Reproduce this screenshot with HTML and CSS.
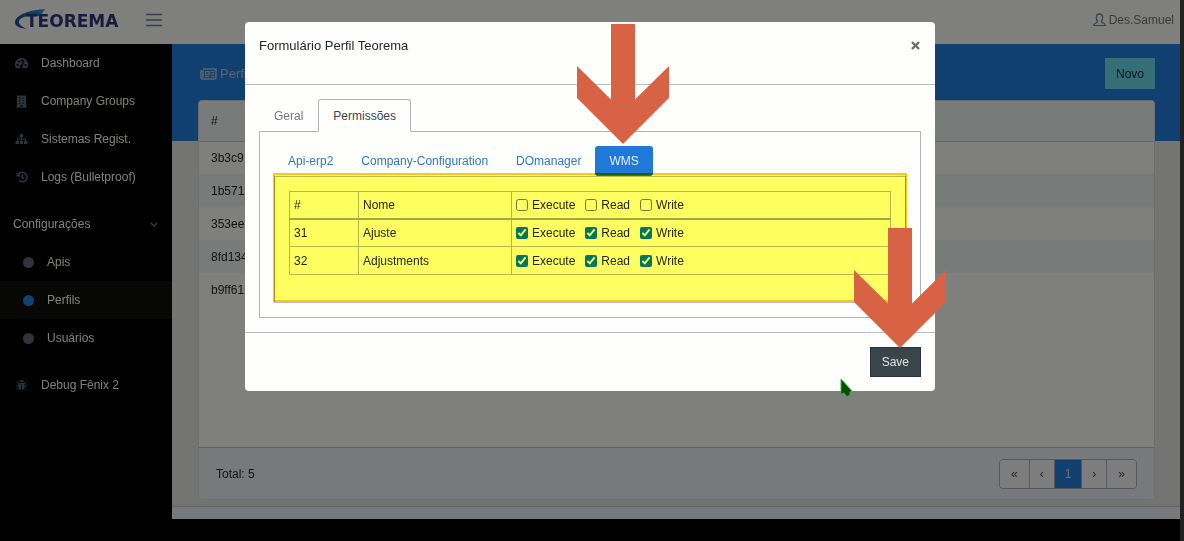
FILE: index.html
```html
<!DOCTYPE html>
<html lang="pt-BR">
<head>
<meta charset="utf-8">
<meta name="viewport" content="width=device-width, initial-scale=1">
<title>Teorema - Perfils</title>
<link rel="stylesheet" href="styles.css">
</head>
<body>
<div class="screen">
  <div class="app">
    <header class="topbar">
      <a class="brand" href="#" aria-label="Teorema">
        <svg width="106" height="24" viewBox="0 0 106 24">
          <defs>
            <linearGradient id="swoosh" x1="0" y1="1" x2="1" y2="0">
              <stop offset="0" stop-color="#24408c"/>
              <stop offset="0.5" stop-color="#1c63a8"/>
              <stop offset="1" stop-color="#28a0e0"/>
            </linearGradient>
          </defs>
          <path d="M31 1C17 2 2 6 1 14c0 4 4 6 12 7C7 18 4 16 5 13c1-3 6-5 12-5l8 0c2-1 4-4 6-7z" fill="url(#swoosh)"/>
          <text class="brand-text" x="12" y="19">TEOREMA</text>
        </svg>
      </a>
      <button class="menu-toggle" type="button" aria-label="Menu">
        <svg width="16" height="14" viewBox="0 0 16 14"><path d="M0 1.500h16M0 7h16M0 12.500h16" stroke="#73818f" stroke-width="1.600"/></svg>
      </button>
      <a class="user" href="#">
        <svg width="13" height="14" viewBox="0 0 13 14"><path d="M4.600 8.600C3.400 7 3.200 5.500 3.300 4 3.500 2 4.700.8 6.500.8S9.500 2 9.700 4c.1 1.500-.1 3-1.300 4.600.2.900 1 1.200 2.200 1.600 1.200.4 1.600 1 1.700 2.300H.7C.8 11.200 1.200 10.600 2.400 10.200 3.600 9.800 4.400 9.500 4.600 8.600z" fill="none" stroke="#73818f" stroke-width="1.200"/></svg>
        Des.Samuel
      </a>
    </header>
    <div class="workspace">
      <nav class="sidebar">
        <a class="nav-item" href="#"><span class="nav-icon"><svg width="13" height="12" viewBox="0 0 26 24"><path fill="#536c79" fill-rule="evenodd" d="M13 2A13 13 0 0 0 2 22h22A13 13 0 0 0 13 2zM5 14a2 2 0 1 0 .1 0zM8 7a2 2 0 1 0 .1 0zM14 5a2 2 0 1 0 .1 0zM21 14a2 2 0 1 0 .1 0zM17 7l2 1-4 9a3 3 0 1 1-3-1z"/></svg></span>Dashboard</a>
        <a class="nav-item" href="#"><span class="nav-icon"><svg width="11" height="13" viewBox="0 0 22 26"><path fill="#536c79" fill-rule="evenodd" d="M2 1h18v22h2v2H0v-2h2zM6 5v2h3V5zM13 5v2h3V5zM6 10v2h3v-2zM13 10v2h3v-2zM6 15v2h3v-2zM13 15v2h3v-2zM9 20v3h4v-3z"/></svg></span>Company Groups</a>
        <a class="nav-item" href="#"><span class="nav-icon"><svg width="13" height="12" viewBox="0 0 26 24"><path fill="#536c79" d="M10 2h6v6h-2v3h8v5h3v6h-7v-6h2v-3h-6v3h2v6h-6v-6h2v-3H6v3h2v6H1v-6h3v-5h8V8h-2z"/></svg></span>Sistemas Regist.</a>
        <a class="nav-item" href="#"><span class="nav-icon"><svg width="12" height="12" viewBox="0 0 24 24"><path d="M4 8a9.500 9.500 0 1 1 2 11M12.500 6v7l4 2" fill="none" stroke="#536c79" stroke-width="3"/><path d="M1 2v9h9z" fill="#536c79"/></svg></span>Logs (Bulletproof)</a>
        <button class="nav-group" type="button">Configurações
          <svg width="8" height="5" viewBox="0 0 8 5"><path d="M1 1l3 3 3-3" fill="none" stroke="#73818f" stroke-width="1.300"/></svg>
        </button>
        <a class="nav-item nav-sub" href="#"><span class="dot"></span>Apis</a>
        <a class="nav-item nav-sub active" href="#"><span class="dot"></span>Perfils</a>
        <a class="nav-item nav-sub" href="#"><span class="dot"></span>Usuários</a>
        <a class="nav-item nav-last" href="#"><span class="nav-icon"><svg width="11" height="12" viewBox="0 0 22 24"><path fill="#536c79" d="M7 6a4 4 0 0 1 8 0zM5 8h12v9a6 6 0 0 1-5 5V10h-2v12a6 6 0 0 1-5-5z"/><path d="M1 5l5 5M21 5l-5 5M0 14h22M1 22l5-5M21 22l-5-5" stroke="#536c79" stroke-width="2"/></svg></span>Debug Fênix 2</a>
      </nav>
      <main class="main">
        <div class="content">
          <div class="page-head">
            <h1 class="page-title">
              <svg width="17" height="12" viewBox="0 0 34 24"><path d="M6 2h26v17q0 3-3 3H5q-3 0-3-3V6h4v13" fill="none" stroke="#b4c8dc" stroke-width="3"/><path d="M11 7h7v6h-7zM21 7h8M21 12h8M10 17h8M21 17h8" fill="none" stroke="#b4c8dc" stroke-width="2.500"/></svg>
              Perfils
            </h1>
            <button class="btn-new" type="button">Novo</button>
          </div>
          <section class="card">
            <table class="list">
              <thead><tr><th>#</th></tr></thead>
              <tbody>
                <tr><td>3b3c9</td></tr>
                <tr><td>1b571</td></tr>
                <tr><td>353ee</td></tr>
                <tr><td>8fd134</td></tr>
                <tr><td>b9ff61</td></tr>
              </tbody>
            </table>
            <div class="card-foot">
              <span>Total: 5</span>
              <div class="pager">
                <button type="button">«</button>
                <button type="button">‹</button>
                <button type="button" class="current">1</button>
                <button type="button">›</button>
                <button type="button">»</button>
              </div>
            </div>
          </section>
        </div>
        <footer class="page-foot"></footer>
      </main>
    </div>
  </div>

  <div class="backdrop">
    <div class="modal" role="dialog" aria-labelledby="modal-title">
      <div class="modal-head">
        <h2 id="modal-title">Formulário Perfil Teorema</h2>
        <button class="close" type="button" aria-label="Fechar">
          <svg width="9" height="9" viewBox="0 0 9 9"><path d="M1 1l7 7M8 1l-7 7" stroke="#6e6e6e" stroke-width="2.400"/></svg>
        </button>
      </div>
      <div class="modal-body">
        <div class="tabs">
          <a class="tab" href="#">Geral</a>
          <a class="tab selected" href="#">Permissões</a>
        </div>
        <div class="tab-panel">
          <div class="pills">
            <a class="pill" href="#">Api-erp2</a>
            <a class="pill" href="#">Company-Configuration</a>
            <a class="pill" href="#">DOmanager</a>
            <a class="pill selected" href="#">WMS</a>
          </div>
          <div class="pill-panel">
            <table class="perms">
              <thead>
                <tr>
                  <th class="col-id">#</th>
                  <th class="col-name">Nome</th>
                  <th><div class="checks">
                    <label><input type="checkbox">Execute</label>
                    <label><input type="checkbox">Read</label>
                    <label><input type="checkbox">Write</label>
                  </div></th>
                </tr>
              </thead>
              <tbody>
                <tr>
                  <td>31</td>
                  <td>Ajuste</td>
                  <td><div class="checks">
                    <label><input type="checkbox" checked>Execute</label>
                    <label><input type="checkbox" checked>Read</label>
                    <label><input type="checkbox" checked>Write</label>
                  </div></td>
                </tr>
                <tr>
                  <td>32</td>
                  <td>Adjustments</td>
                  <td><div class="checks">
                    <label><input type="checkbox" checked>Execute</label>
                    <label><input type="checkbox" checked>Read</label>
                    <label><input type="checkbox" checked>Write</label>
                  </div></td>
                </tr>
              </tbody>
            </table>
            <div class="highlight"></div>
          </div>
        </div>
      </div>
      <div class="modal-foot">
        <button class="btn-save" type="button">Save</button>
      </div>
      <svg class="arrow arrow-tab" width="92" height="120" viewBox="0 0 92 120"><path d="M34 0h24v75.500L92 42v32L46 120 0 74V42l34 33.500z" fill="#d86344"/></svg>
      <svg class="arrow arrow-save" width="92" height="120" viewBox="0 0 92 120"><path d="M34 0h24v75.500L92 42v32L46 120 0 74V42l34 33.500z" fill="#d86344"/></svg>
      <svg class="cursor" width="13" height="20" viewBox="0 0 13 20"><path d="M1 1v15.500l3-1.500 2.500 3.500 3.500-1V14l2-1z" fill="#064d06" stroke="#3fae3f" stroke-width="1"/></svg>
    </div>
  </div>
</div>
</body>
</html>
```
FILE: styles.css
```css
* { box-sizing: border-box; }

body {
  margin: 0;
  background: #222;
  color: #23282c;
  font: 12px/18px "Liberation Sans", Arial, sans-serif;
}

button { font: inherit; cursor: pointer; }
a { text-decoration: none; color: inherit; }
svg { display: block; flex: none; }
table { border-collapse: collapse; width: 100%; }
th { font-weight: 400; text-align: left; }

.screen {
  position: relative;
  display: flex;
  min-height: 100vh;
  margin-right: 4px;
  padding-bottom: 22px;
  background: #000;
}

.app {
  flex: 1;
  display: flex;
  flex-direction: column;
}

/* Top bar */
.topbar {
  display: flex;
  align-items: center;
  height: 44px;
  padding: 0 6px 4px 14px;
  background: #fffffc;
}
.brand-text {
  font: bold 17px "DejaVu Sans", sans-serif;
  fill: #33377c;
}
.menu-toggle {
  margin-left: 26px;
  padding: 0;
  border: 0;
  background: none;
}
.user {
  display: flex;
  align-items: center;
  gap: 3px;
  margin-left: auto;
  color: #73777d;
}

.workspace {
  flex: 1;
  display: flex;
}

/* Sidebar */
.sidebar {
  width: 172px;
  background: #000;
  color: #fffdf6;
}
.nav-item {
  display: flex;
  align-items: center;
  height: 38px;
  padding-left: 15px;
}
.nav-icon {
  display: flex;
  justify-content: center;
  width: 13px;
  margin-right: 13px;
}
.nav-group {
  display: flex;
  align-items: center;
  justify-content: space-between;
  width: 100%;
  height: 38px;
  margin-top: 9px;
  padding: 0 14px 0 13px;
  border: 0;
  background: none;
  color: inherit;
}
.nav-sub { padding-left: 23px; }
.dot {
  width: 11px;
  height: 11px;
  margin-right: 13px;
  border-radius: 50%;
  background: #5c6873;
}
.active { background: #0e100a; }
.active .dot { background: #2080e8; }
.nav-last { margin-top: 9px; }

/* Page */
.main {
  flex: 1;
  display: flex;
  flex-direction: column;
  background: #e9e8e4;
}
.content {
  flex: 1;
  display: flex;
  flex-direction: column;
  padding: 14px 25px 6px 26px;
  background: linear-gradient(#227edf, #227edf) no-repeat 0 0 / 100% 97px;
}
.page-head {
  display: flex;
  align-items: center;
  justify-content: space-between;
  margin-bottom: 11px;
}
.page-title {
  display: flex;
  align-items: center;
  gap: 3px;
  margin: 0;
  padding-left: 2px;
  font-size: 13px;
  font-weight: 400;
  color: #b4c8dc;
}
.btn-new {
  height: 31px;
  padding: 0 11px;
  border: 0;
  background: #6cdcf0;
  color: #142c34;
}
.card {
  flex: 1;
  display: flex;
  flex-direction: column;
  justify-content: space-between;
  overflow: hidden;
  border: 1px solid #d8dde4;
  border-radius: 4px;
  background: #fffffc;
}
.list th {
  height: 40px;
  padding: 0 12px;
  border-bottom: 1px solid #c2c8d6;
  background: #f2f4f4;
}
.list td {
  height: 33px;
  padding: 0 12px;
}
.list tbody tr:nth-child(even) { background: #f2f4f5; }
.card-foot {
  display: flex;
  align-items: center;
  justify-content: space-between;
  height: 52px;
  padding: 0 17px;
  border-top: 1px solid #c2c8d0;
  background: #f0f3f4;
}
.pager {
  display: flex;
  overflow: hidden;
  height: 30px;
  border: 1px solid #a8b0bc;
  border-radius: 4px;
}
.pager button {
  padding: 0 10px;
  border: 0;
  border-right: 1px solid #a8b0bc;
  background: #fafafa;
  color: #4a5058;
}
.pager button:first-child { padding: 0 11px; }
.pager button:last-child {
  padding: 0 11px;
  border-right: 0;
}
.pager .current {
  background: #227edf;
  color: #d0e0f0;
}
.page-foot {
  height: 13px;
  border-top: 1px solid #c2c8d0;
  background: #f0f3f4;
}

/* Modal */
.backdrop {
  position: absolute;
  inset: 0;
  padding: 22px 16px;
  background: rgba(0, 0, 0, 0.5);
}
.modal {
  position: relative;
  max-width: 690px;
  margin: 0 auto;
  border-radius: 4px;
  background: #fefefd;
}
.modal-head {
  display: flex;
  align-items: flex-start;
  justify-content: space-between;
  height: 63px;
  padding: 15px 15px 0 14px;
  border-bottom: 1px solid #b9bcc0;
}
.modal-head h2 {
  margin: 0;
  font-size: 13px;
  font-weight: 400;
}
.close {
  padding: 4px 0;
  border: 0;
  background: none;
}
.modal-body { padding: 14px; }
.tabs { display: flex; }
.tab {
  height: 32px;
  padding: 7px 14px;
  border: 1px solid transparent;
  color: #73777d;
}
.tab.selected {
  z-index: 1;
  height: 33px;
  margin-bottom: -1px;
  border-color: #b0b3ba;
  border-bottom-color: #fefefd;
  border-radius: 3px 3px 0 0;
  background: #fefefd;
  color: #3c4248;
}
.tab-panel {
  padding: 14px;
  border: 1px solid #b0b3ba;
}
.pills { display: flex; }
.pill {
  height: 30px;
  padding: 6px 14px;
  border-radius: 3px;
  color: #2c78c8;
}
.pill.selected {
  background: #2079d8;
  color: #e4f0fc;
}
.pill-panel {
  position: relative;
  padding: 14px 14px 27px;
  border: 1px solid #b8bcc2;
}
.perms th, .perms td {
  height: 28px;
  padding: 0 4px;
  border: 1px solid #b4b8bc;
}
.perms thead th {
  height: 27px;
  border-bottom: 2px solid #a4a8aa;
}
.perms .col-id { width: 69px; }
.perms .col-name { width: 153px; }
.checks {
  display: flex;
  gap: 10px;
}
.checks label {
  display: flex;
  align-items: center;
  gap: 4px;
}
.checks input {
  width: 12px;
  height: 12px;
  margin: 0;
}
.highlight {
  position: absolute;
  inset: -4px -2px 0 -2px;
  border: 2px solid #ffc814;
  background: #ffff62;
  mix-blend-mode: multiply;
  pointer-events: none;
}
.modal-foot {
  display: flex;
  justify-content: flex-end;
  padding: 14px;
  border-top: 1px solid #b9bcc0;
}
.btn-save {
  height: 30px;
  padding: 0 11px;
  border: 1px solid #2a3238;
  background: #3a454b;
  color: #e0e4e8;
}

/* Guide marks over the modal */
.arrow, .cursor {
  position: absolute;
  pointer-events: none;
}
.arrow-tab { top: 2px; left: 332px; }
.arrow-save { top: 206px; right: -11px; }
.cursor { top: 356px; right: 82px; }
```
